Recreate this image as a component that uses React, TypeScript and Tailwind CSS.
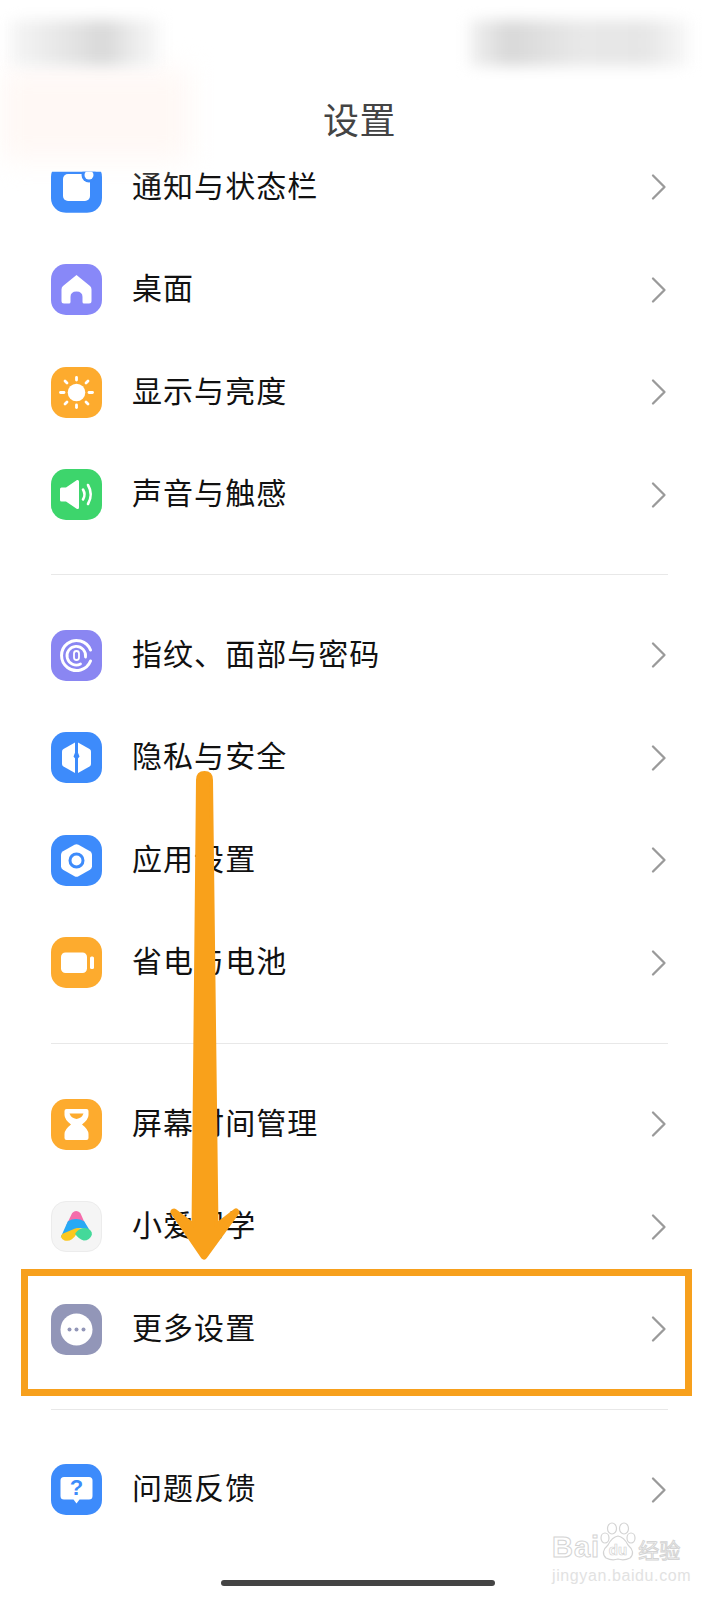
import React from "react";

const IconBox = ({ bg, children, className = "" }: { bg: string; children: React.ReactNode; className?: string }) => (
  <div className={`w-[51px] h-[51px] rounded-[15px] shrink-0 ${bg} ${className}`}>
    <svg viewBox="0 0 51 51" width="51" height="51" className="block">
      {children}
    </svg>
  </div>
);

const Chevron = () => (
  <svg width="18" height="30" viewBox="0 0 18 30" fill="none" className="shrink-0">
    <path d="M4 3.5 L15.5 15 L4 26.5" stroke="#9a9a9a" strokeWidth="2.3" strokeLinecap="round" strokeLinejoin="round" />
  </svg>
);

const Row = ({ icon, label }: { icon: React.ReactNode; label: string }) => (
  <div className="h-[102.5px] flex items-center pl-[51px] pr-[52px]">
    {icon}
    <span className="ml-[30px] text-[30px] leading-none tracking-[1.05px] text-[#111] flex-1 -mt-[7px]">{label}</span>
    <Chevron />
  </div>
);

const Divider = () => <div className="h-[1px] mx-[51px] bg-[#e8e8e8]" />;

// the top of this icon slides under the title bar
const notifyIcon = (
  <IconBox bg="bg-[#3d8bfb]" className="[clip-path:inset(10px_0_0_0)]">
    <rect x="12" y="12" width="27" height="27" rx="5" fill="#fff" />
    <circle cx="38" cy="13" r="7.5" fill="#3d8bfb" />
    <circle cx="38" cy="13" r="4.5" fill="#fff" />
  </IconBox>
);

const homeIcon = (
  <IconBox bg="bg-[#8888f8]">
    <path
      d="M25.5 11 L39 22 Q40.5 23.3 40.5 25.5 V37 Q40.5 39.5 38 39.5 H33 Q31.5 39.5 31.5 38 V33 Q31.5 27.5 25.5 27.5 Q19.5 27.5 19.5 33 V38 Q19.5 39.5 18 39.5 H13 Q10.5 39.5 10.5 37 V25.5 Q10.5 23.3 12 22 Z"
      fill="#fff"
    />
  </IconBox>
);

const sunIcon = (
  <IconBox bg="bg-[#fdab2e]">
    <circle cx="25.5" cy="25.5" r="8.8" fill="#fff" />
    <g stroke="#fff" strokeWidth="2.8" strokeLinecap="round">
      <path d="M25.5 10.5 V13" />
      <path d="M25.5 38 V40.5" />
      <path d="M9.5 25.5 H13" />
      <path d="M38 25.5 H41.5" />
      <path d="M14 14 L16 16" />
      <path d="M35 35 L37 37" />
      <path d="M14 37 L16 35" />
      <path d="M35 16 L37 14" />
    </g>
  </IconBox>
);

const soundIcon = (
  <IconBox bg="bg-[#3dd56c]">
    <path d="M9 20 Q9 18.5 10.5 18.5 H15 L26 11 Q28 10.5 28 12.5 V38.5 Q28 40.5 26 40 L15 32.5 H10.5 Q9 32.5 9 31 Z" fill="#fff" />
    <path d="M32 20.5 Q35 25.5 32 30.5" stroke="#fff" strokeWidth="2.6" fill="none" strokeLinecap="round" />
    <path d="M37 16 Q42.5 25.5 37 35" stroke="#fff" strokeWidth="2.6" fill="none" strokeLinecap="round" />
  </IconBox>
);

const fingerIcon = (
  <IconBox bg="bg-[#8a86f2]">
    <g stroke="#fff" fill="none" strokeLinecap="round">
      <path d="M39.5 20 A15 15 0 1 0 39.5 31" strokeWidth="3" />
      <path d="M34.5 27 A9.3 9.3 0 1 0 29.5 34" strokeWidth="2.8" />
      <rect x="23" y="21" width="5" height="9" rx="2.5" strokeWidth="1.8" />
    </g>
  </IconBox>
);

const shieldIcon = (
  <IconBox bg="bg-[#3d8bfb]">
    <path d="M24 10.5 V41 L12.5 34.5 Q11 33.6 11 32 V19.5 Q11 17.9 12.5 17 Z" fill="#fff" />
    <path d="M27 10.5 V41 L38.5 34.5 Q40 33.6 40 32 V19.5 Q40 17.9 38.5 17 Z" fill="#fff" />
    <path d="M25.5 17 L28.5 24.5 L26.5 27 V36 H24.5 V27 L22.5 24.5 Z" fill="#3d8bfb" />
  </IconBox>
);

const hexIcon = (
  <IconBox bg="bg-[#3d8bfb]">
    <path d="M23.5 9.7 Q25.5 8.6 27.5 9.7 L39 16.3 Q41 17.5 41 19.7 V31.3 Q41 33.5 39 34.7 L27.5 41.3 Q25.5 42.4 23.5 41.3 L12 34.7 Q10 33.5 10 31.3 V19.7 Q10 17.5 12 16.3 Z" fill="#fff" />
    <circle cx="25.5" cy="25.5" r="6.5" fill="none" stroke="#3d8bfb" strokeWidth="3" />
  </IconBox>
);

const batteryIcon = (
  <IconBox bg="bg-[#fdab2e]">
    <rect x="10" y="15.5" width="26" height="20.5" rx="4.5" fill="#fff" />
    <rect x="39" y="19.5" width="4" height="12.5" rx="1.5" fill="#fff" />
  </IconBox>
);

const hourglassIcon = (
  <IconBox bg="bg-[#fdab2e]">
    <path
      d="M15.5 10 H35.5 Q37.5 10 37.5 12 V16 Q37.5 20.5 31 25.5 Q37.5 30.5 37.5 35 V39 Q37.5 41 35.5 41 H15.5 Q13.5 41 13.5 39 V35 Q13.5 30.5 20 25.5 Q13.5 20.5 13.5 16 V12 Q13.5 10 15.5 10 Z"
      fill="#fff"
    />
    <path d="M18.5 14.5 H32.5 Q31 19 25.5 20 Q20 19 18.5 14.5 Z" fill="#fdab2e" />
  </IconBox>
);

const xiaoaiIcon = (
  <div className="w-[51px] h-[51px] rounded-[15px] shrink-0 bg-[#f5f5f5] border border-[#ececec]">
    <svg viewBox="0 0 51 51" width="49" height="49" className="block">
      <path d="M21 11.5 Q25 7 29.5 11.5 L35 24 L15 24 Z" fill="#f56cab" />
      <path d="M16.5 20 Q25 15.5 33.5 20 L39.5 30 Q30 24 21 30 L9 37 Z" fill="#27a9f5" />
      <path d="M21 29 Q27 25 33 29 Q28 30 25 34 Q20 42 13 40 Q7 37 11 33 Z" fill="#fbc81f" />
      <path d="M24 33 Q28 26.5 35 27 Q42 28.5 41.5 34 Q39.5 40 33 40 Q27.5 38.5 24 33 Z" fill="#44d99a" />
    </svg>
  </div>
);

const moreIcon = (
  <IconBox bg="bg-[#9296b8]">
    <circle cx="25.5" cy="25.5" r="16" fill="#fff" />
    <circle cx="18.5" cy="25.5" r="2" fill="#9296b8" />
    <circle cx="25.5" cy="25.5" r="2" fill="#9296b8" />
    <circle cx="32.5" cy="25.5" r="2" fill="#9296b8" />
  </IconBox>
);

const feedbackIcon = (
  <IconBox bg="bg-[#3d8bfb]">
    <path d="M13 13 H38 Q41.5 13 41.5 16.5 V32 Q41.5 35.5 38 35.5 H28.5 L25.5 39.5 L22.5 35.5 H13 Q9.5 35.5 9.5 32 V16.5 Q9.5 13 13 13 Z" fill="#fff" />
    <text x="25.5" y="31" textAnchor="middle" fontSize="22" fontWeight="700" fill="#3d8bfb" fontFamily="'Liberation Sans', sans-serif">?</text>
  </IconBox>
);

const Watermark = () => (
  <div className="absolute left-[552px] top-[1522px] w-[132px] h-[62px] select-none">
    <div className="flex items-end h-[40px]">
      <span className="text-[29px] leading-none font-bold text-white [-webkit-text-stroke:1px_#d4d4d4] font-['Liberation_Sans',sans-serif] tracking-[1px]">Bai</span>
      <svg width="40" height="40" viewBox="0 0 40 40" fill="none" stroke="#d4d4d4" strokeWidth="1.2" className="-ml-[2px] shrink-0">
        <ellipse cx="7" cy="16" rx="4" ry="5" />
        <ellipse cx="14" cy="6.5" rx="4.5" ry="5.5" />
        <ellipse cx="26" cy="6.5" rx="4.5" ry="5.5" />
        <ellipse cx="33" cy="16" rx="4" ry="5" />
        <path d="M20 14 Q26 15 30 23 Q38 30 32 36 Q26 39 20 37 Q14 39 8 36 Q2 30 10 23 Q14 15 20 14 Z" />
        <text x="20" y="33" textAnchor="middle" fontSize="15" fontWeight="700" fill="#fff" stroke="#d4d4d4" strokeWidth="0.7" fontFamily="'Liberation Sans', sans-serif">du</text>
      </svg>
      <span className="text-[21px] leading-none text-white [-webkit-text-stroke:1px_#d4d4d4] mb-[2px]">经验</span>
    </div>
    <div className="text-[16px] leading-none mt-[6px] text-[#e2e2e2] tracking-[0.6px] font-['Liberation_Sans',sans-serif] whitespace-nowrap">jingyan.baidu.com</div>
  </div>
);

const Arrow = () => (
  <svg width="90" height="500" viewBox="0 0 90 500" className="absolute left-[160px] top-[770px]">
    <path
      d="M39.5 10 Q39.5 4.5 44.5 4.5 Q49.5 4.5 49.5 10 L55 458 L76 442 L44 486 L14 442 L35 458 Z"
      fill="#f9a11b"
      stroke="#f9a11b"
      strokeWidth="7"
      strokeLinejoin="round"
      className="[paint-order:stroke]"
    />
  </svg>
);

export default function App() {
  return (
    <div className="relative w-[719px] h-[1600px] bg-white overflow-hidden font-['Noto_Sans_CJK_SC','Noto_Sans',sans-serif]">
      <div className="absolute left-0 top-[70px] w-[190px] h-[90px] bg-[#fff8f5] blur-[14px]" />
      <div className="h-[172px] relative">
        <div className="flex justify-between pt-[20px] pl-[10px] pr-[30px]">
          <div className="w-[150px] h-[46px] bg-[linear-gradient(to_right,#f6f6f6,#e2e2e2_45%,#d8d8d8_62%,#eeeeee_85%,#f8f8f8)] blur-[7px]" />
          <div className="w-[220px] h-[46px] bg-[linear-gradient(to_right,#f2f2f2,#d8d8d8_18%,#e8e8e8_50%,#e6e6e6_80%,#f8f8f8)] blur-[7px]" />
        </div>
        <div className="text-center text-[36px] leading-none text-[#444] mt-[34px] tracking-[0.5px]">设置</div>
      </div>

      <div>
        <div className="-mt-[36px]">
          <Row icon={notifyIcon} label="通知与状态栏" />
          <Row icon={homeIcon} label="桌面" />
          <Row icon={sunIcon} label="显示与亮度" />
          <Row icon={soundIcon} label="声音与触感" />
        </div>
        <div className="mt-[28px] mb-[29px]"><Divider /></div>
        <Row icon={fingerIcon} label="指纹、面部与密码" />
        <Row icon={shieldIcon} label="隐私与安全" />
        <Row icon={hexIcon} label="应用设置" />
        <Row icon={batteryIcon} label="省电与电池" />
        <div className="mt-[29px] mb-[29px]"><Divider /></div>
        <Row icon={hourglassIcon} label="屏幕时间管理" />
        <Row icon={xiaoaiIcon} label="小爱同学" />
        <Row icon={moreIcon} label="更多设置" />
        <div className="mt-[28px] mb-[29px]"><Divider /></div>
        <Row icon={feedbackIcon} label="问题反馈" />
      </div>

      <div className="absolute left-[221px] top-[1580px] w-[274px] h-[6px] rounded-full bg-[#444]" />
      <Watermark />
      <div className="absolute left-[21px] top-[1269px] w-[671px] h-[127px] border-[7px] border-[#f7a01d]" />
      <Arrow />
    </div>
  );
}
